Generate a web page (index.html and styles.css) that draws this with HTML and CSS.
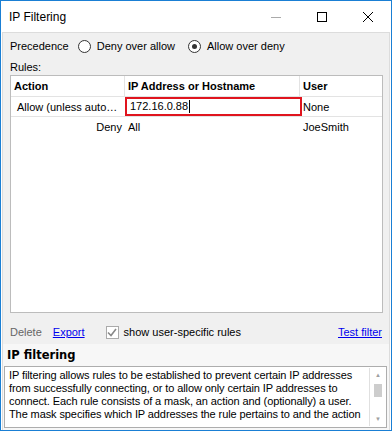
FILE: index.html
```html
<!DOCTYPE html>
<html lang="en">
<head>
    <meta charset="UTF-8">
    <title>IP Filtering</title>
    <link rel="stylesheet" href="styles.css">
</head>
<body>
    <div class="window">
        <div class="titlebar">
            <span class="title">IP Filtering</span>
            <div class="controls">
                <span class="ctl min"><svg width="10" height="10" viewBox="0 0 10 10"><path d="M0 5.5h10" stroke="#aaa" stroke-width="1"/></svg></span>
                <span class="ctl"><svg width="10" height="10" viewBox="0 0 10 10"><rect x="0.5" y="0.5" width="9" height="9" fill="none" stroke="#000" stroke-width="1"/></svg></span>
                <span class="ctl"><svg width="10" height="10" viewBox="0 0 10 10"><path d="M0 0L10 10M10 0L0 10" stroke="#000" stroke-width="1"/></svg></span>
            </div>
        </div>
        <div class="client">
            <div class="precedence">
                <span>Precedence</span>
                <label class="radio"><span class="dot"></span>Deny over allow</label>
                <label class="radio"><span class="dot on"></span>Allow over deny</label>
            </div>
            <div class="rules-label">Rules:</div>
            <div class="rules">
                <div class="row head">
                    <div class="cell">Action</div>
                    <div class="cell">IP Address or Hostname</div>
                    <div class="cell">User</div>
                </div>
                <div class="row">
                    <div class="cell action">Allow (unless autoblocked)</div>
                    <div class="cell editing">172.16.0.88<span class="caret"></span></div>
                    <div class="cell">None</div>
                </div>
                <div class="row">
                    <div class="cell action">Deny</div>
                    <div class="cell">All</div>
                    <div class="cell">JoeSmith</div>
                </div>
            </div>
            <div class="toolbar">
                <span class="disabled">Delete</span>
                <a href="#" class="link">Export</a>
                <label class="check"><span class="box"><svg width="10" height="9" viewBox="0 0 10 9"><path d="M1 4.5L4 7.5L9 1" fill="none" stroke="#888" stroke-width="1.6"/></svg></span>show user-specific rules</label>
                <a href="#" class="link right">Test filter</a>
            </div>
            <div class="help">
                <div class="help-title">IP filtering</div>
                <div class="help-box">
                    <p>IP filtering allows rules to be established to prevent certain IP addresses from successfully connecting, or to allow only certain IP addresses to connect. Each rule consists of a mask, an action and (optionally) a user. The mask specifies which IP addresses the rule pertains to and the action</p>
                    <div class="scrollbar">
                        <span class="arrow">&#9650;</span>
                        <span class="thumb"></span>
                        <span class="arrow down">&#9660;</span>
                    </div>
                </div>
            </div>
        </div>
    </div>
</body>
</html>
```

FILE: styles.css
```css
body {
    margin: 0;
    font-family: "Liberation Sans", Arial, sans-serif;
    font-size: 11px;
    color: #000;
}
.window {
    width: 392px;
    height: 431px;
    box-sizing: border-box;
    border: 1px solid #1a7fd4;
    display: flex;
    flex-direction: column;
    background: #fff;
}
.titlebar {
    height: 31px;
    display: flex;
    align-items: center;
    justify-content: space-between;
    padding-left: 8px;
    flex-shrink: 0;
}
.title {
    font-size: 12px;
}
.controls {
    display: flex;
    height: 100%;
}
.ctl {
    width: 46px;
    display: flex;
    align-items: center;
    justify-content: center;
}
.client {
    flex: 1;
    min-height: 0;
    background: #f0f0f0;
    border: 1px solid #dcdcdc;
    border-bottom: none;
    margin: 0 1px;
    display: flex;
    flex-direction: column;
}
.precedence {
    display: flex;
    align-items: center;
    height: 26px;
    padding-left: 7px;
}
.radio {
    display: flex;
    align-items: center;
    margin-left: 9px;
}
.radio + .radio {
    margin-left: 13px;
}
.dot {
    width: 11px;
    height: 11px;
    border: 1px solid #333;
    border-radius: 50%;
    margin-right: 6px;
    background: #fff;
    position: relative;
}
.dot.on::after {
    content: "";
    position: absolute;
    left: 3px;
    top: 3px;
    width: 5px;
    height: 5px;
    border-radius: 50%;
    background: #333;
}
.rules-label {
    padding-left: 7px;
    height: 16px;
    line-height: 16px;
}
.rules {
    margin: 0 6px 0 7px;
    height: 236px;
    flex-shrink: 0;
    background: #fff;
    border: 1px solid #bcbcbc;
}
.row {
    display: grid;
    grid-template-columns: 114px 175px 1fr;
    height: 19px;
    border-bottom: 1px solid #e3e3e3;
    align-items: center;
}
.row:last-child {
    border-bottom: none;
}
.head {
    height: 20px;
    font-weight: bold;
}
.head .cell {
    padding-left: 3px;
    border-right: 1px solid #e3e3e3;
    height: 100%;
    line-height: 20px;
}
.head .cell:last-child {
    border-right: none;
}
.cell {
    padding-left: 3px;
    white-space: nowrap;
    overflow: hidden;
    text-overflow: ellipsis;
}
.cell.action {
    text-align: right;
    padding: 0 3px 0 6px;
}
.cell.editing {
    height: 19px;
    box-sizing: border-box;
    border: 2px solid #e0141e;
    width: 177px;
    padding-left: 3px;
    line-height: 15px;
    display: flex;
    align-items: center;
}
.caret {
    display: inline-block;
    width: 1px;
    height: 13px;
    background: #000;
    margin-left: 1px;
}
.toolbar {
    display: flex;
    align-items: center;
    height: 22px;
    padding: 8px 7px 0;
    flex-shrink: 0;
}
.disabled {
    color: #666;
}
.link {
    color: #0000ee;
    margin-left: 11px;
}
.check {
    display: flex;
    align-items: center;
    margin-left: 21px;
}
.box {
    width: 11px;
    height: 11px;
    border: 1px solid #aaa;
    background: #fff;
    margin-right: 5px;
    display: flex;
    align-items: center;
    justify-content: center;
}
.link.right {
    margin-left: auto;
}
.help {
    flex: 1;
    min-height: 0;
    margin-top: 1px;
    background: #f7f7f7;
    display: flex;
    flex-direction: column;
    padding: 0 2px 2px 1px;
}
.help-title {
    font-family: "DejaVu Sans", sans-serif;
    font-weight: bold;
    font-size: 11.5px;
    height: 22px;
    line-height: 23px;
    padding-left: 3px;
    flex-shrink: 0;
}
.help-box {
    flex: 1;
    min-height: 0;
    display: flex;
    background: #fff;
    border: 1px solid #adadad;
}
.help-box p {
    margin: 0;
    flex: 1;
    padding: 2px 0 0 4px;
    line-height: 13px;
    letter-spacing: -0.1px;
    overflow: hidden;
}
.scrollbar {
    width: 16px;
    border-left: 1px solid #e0e0e0;
    display: flex;
    flex-direction: column;
    align-items: center;
    margin: 1px 0;
}
.arrow {
    font-size: 6px;
    color: #a0a0a0;
    height: 14px;
    line-height: 14px;
}
.thumb {
    width: 8px;
    height: 13px;
    background: #cdcdcd;
    margin-top: 2px;
}
.arrow.down {
    margin-top: auto;
}
```
